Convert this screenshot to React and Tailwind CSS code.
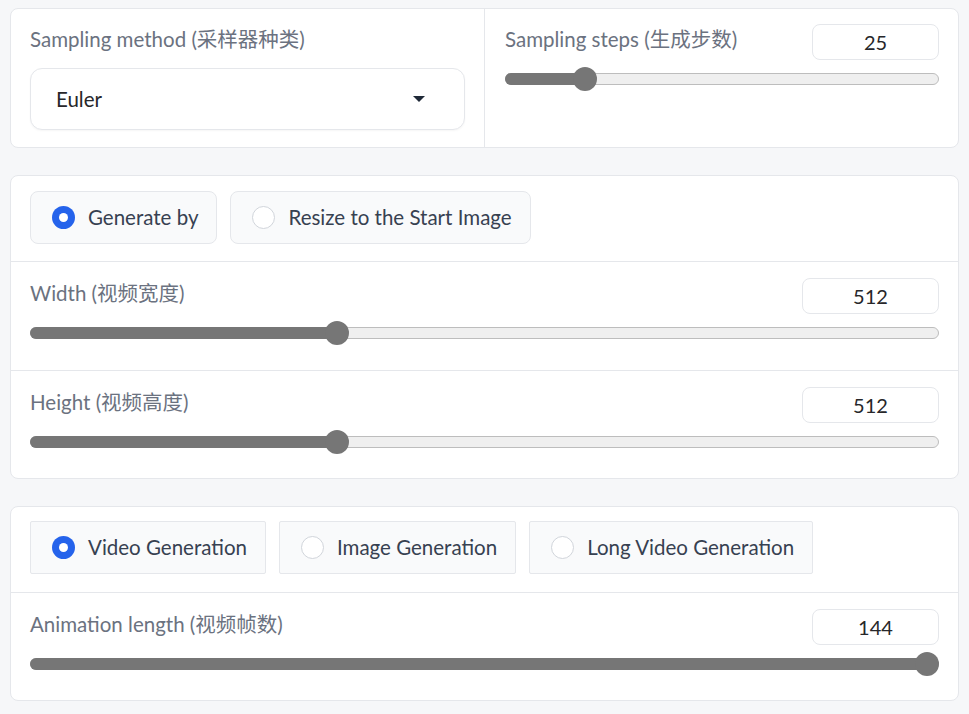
import { useState } from 'react';

// Gradio-like settings panel: sampler, sliders and radio groups

function Slider({ percent }) {
  return (
    <div className="relative h-[24px] mt-[7px]">
      <div className="absolute left-0 right-0 top-[6px] h-[12px] rounded-full bg-[#efefef] border border-[#bdbdbd]" />
      <div
        className="absolute left-0 top-[6px] h-[12px] rounded-full bg-[#767676]"
        style={{ width: `${percent}%` }}
      />
      <div
        className="absolute top-0 w-[24px] h-[24px] -ml-[12px] rounded-full bg-[#767676]"
        style={{ left: `${percent}%` }}
      />
    </div>
  );
}

function NumberBox({ value, wide }) {
  return (
    <div
      className={`${wide ? 'w-[137px]' : 'w-[127px]'} h-[36px] flex items-center justify-center rounded-lg border border-[#e5e7eb] bg-white text-[20px] text-[#27272a]`}
    >
      {value}
    </div>
  );
}

function SliderRow({ label, value, percent, wide }) {
  return (
    <div>
      <div className="flex items-center justify-between">
        <span className="pb-[6px] text-[20.5px] text-[#6b7280] leading-[24px]">{label}</span>
        <NumberBox value={value} wide={wide} />
      </div>
      <Slider percent={percent} />
    </div>
  );
}

function Radio({ checked }) {
  if (checked) {
    return (
      <span className="w-[23px] h-[23px] rounded-full bg-[#2563eb] flex items-center justify-center shrink-0">
        <span className="w-[9px] h-[9px] rounded-full bg-white" />
      </span>
    );
  }
  return <span className="w-[23px] h-[23px] rounded-full bg-white border border-[#d1d5db] shrink-0" />;
}

function RadioButton({ label, checked, square, onClick }) {
  return (
    <button
      onClick={onClick}
      className={`h-[53px] flex items-center gap-[13px] pl-[21px] pr-[18px] border border-[#e5e7eb] bg-[#f9fafb] text-[20.5px] text-[#374151] ${square ? 'rounded-[2px]' : 'rounded-lg'}`}
    >
      <Radio checked={checked} />
      <span>{label}</span>
    </button>
  );
}

export default function App() {
  const [sizeMode, setSizeMode] = useState('generate');
  const [genMode, setGenMode] = useState('video');

  return (
    <div className="min-h-screen bg-[#f6f7f9] px-[10px] pt-[8px] pb-4 font-['Lato','Noto_Sans_CJK_SC',sans-serif] flex flex-col gap-[27px]">
      {/* sampler card */}
      <div className="flex bg-white border border-[#e5e7eb] rounded-lg">
        <div className="w-[474px] pl-[19px] pr-[19px] pt-[18px] pb-[17px] border-r border-[#e5e7eb]">
          <div className="text-[20.5px] text-[#6b7280] leading-[24px]">Sampling method (采样器种类)</div>
          <div className="mt-[17px] h-[62px] flex items-center justify-between pl-[25px] pr-[39px] rounded-xl border border-[#e5e7eb] bg-white shadow-[0_1px_2px_rgba(0,0,0,0.04)]">
            <span className="text-[20.5px] text-[#27272a]">Euler</span>
            <svg width="12" height="6" viewBox="0 0 12 6">
              <path d="M0 0 L12 0 L6 6 Z" fill="#1f2937" />
            </svg>
          </div>
        </div>
        <div className="flex-1 pl-[20px] pr-[19px] pt-[15px]">
          <SliderRow label="Sampling steps (生成步数)" value="25" percent={18.5} />
        </div>
      </div>

      {/* size card */}
      <div className="bg-white border border-[#e5e7eb] rounded-lg">
        <div className="flex gap-[13px] px-[19px] pt-[15px] pb-[17px] border-b border-[#e5e7eb]">
          <RadioButton label="Generate by" checked={sizeMode === 'generate'} onClick={() => setSizeMode('generate')} />
          <RadioButton label="Resize to the Start Image" checked={sizeMode === 'resize'} onClick={() => setSizeMode('resize')} />
        </div>
        <div className="px-[19px] pt-[16px] pb-[25px] border-b border-[#e5e7eb]">
          <SliderRow label="Width (视频宽度)" value="512" percent={33.8} wide />
        </div>
        <div className="px-[19px] pt-[16px] pb-[24px]">
          <SliderRow label="Height (视频高度)" value="512" percent={33.8} wide />
        </div>
      </div>

      {/* generation card */}
      <div className="bg-white border border-[#e5e7eb] rounded-lg">
        <div className="flex gap-[13px] px-[19px] pt-[14px] pb-[18px] border-b border-[#e5e7eb]">
          <RadioButton square label="Video Generation" checked={genMode === 'video'} onClick={() => setGenMode('video')} />
          <RadioButton square label="Image Generation" checked={genMode === 'image'} onClick={() => setGenMode('image')} />
          <RadioButton square label="Long Video Generation" checked={genMode === 'long'} onClick={() => setGenMode('long')} />
        </div>
        <div className="px-[19px] pt-[16px] pb-[24px]">
          <SliderRow label="Animation length (视频帧数)" value="144" percent={98.7} />
        </div>
      </div>
    </div>
  );
}
